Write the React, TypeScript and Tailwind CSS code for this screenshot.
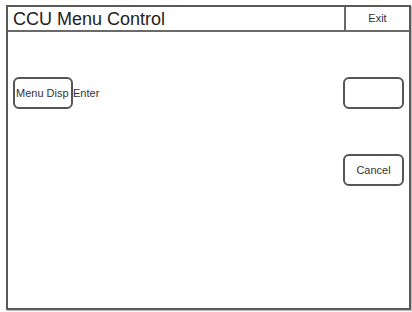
export default function App() {
  return (
    <div className="h-[312px] w-[412px] bg-white pl-[6px] pt-[5px]" style={{ fontFamily: '"Liberation Sans", Arial, sans-serif' }}>
      <div className="flex h-[305px] w-[405px] flex-col border-2 border-[#5a5a5a] shadow-[1px_1px_1px_rgba(0,0,0,0.25)]">
        <div className="flex h-[25px] shrink-0 border-b-2 border-[#6a6a6a]">
          <div className="flex flex-1 items-center pl-[5px] text-[18px] leading-none text-[#222]">CCU Menu Control</div>
          <div className="flex w-[65px] items-center justify-center border-l-2 border-[#6a6a6a] text-[11px] text-[#333]">Exit</div>
        </div>
        <div className="flex flex-1 justify-between px-[5px] pt-[45px]">
          <div className="flex h-[32px] items-center">
            <div className="flex h-[32px] w-[60px] items-center rounded-[6px] border-2 border-[#555] pl-[1px] text-[11px] whitespace-nowrap text-[#333]">
              Menu Disp
            </div>
            <span className="text-[11px] text-[#333]">Enter</span>
          </div>
          <div className="flex flex-col gap-[45px]">
            <div className="h-[32px] w-[61px] rounded-[6px] border-2 border-[#555]" />
            <div className="flex h-[32px] w-[61px] items-center justify-center rounded-[6px] border-2 border-[#555] text-[11px] text-[#333]">
              Cancel
            </div>
          </div>
        </div>
      </div>
    </div>
  );
}
